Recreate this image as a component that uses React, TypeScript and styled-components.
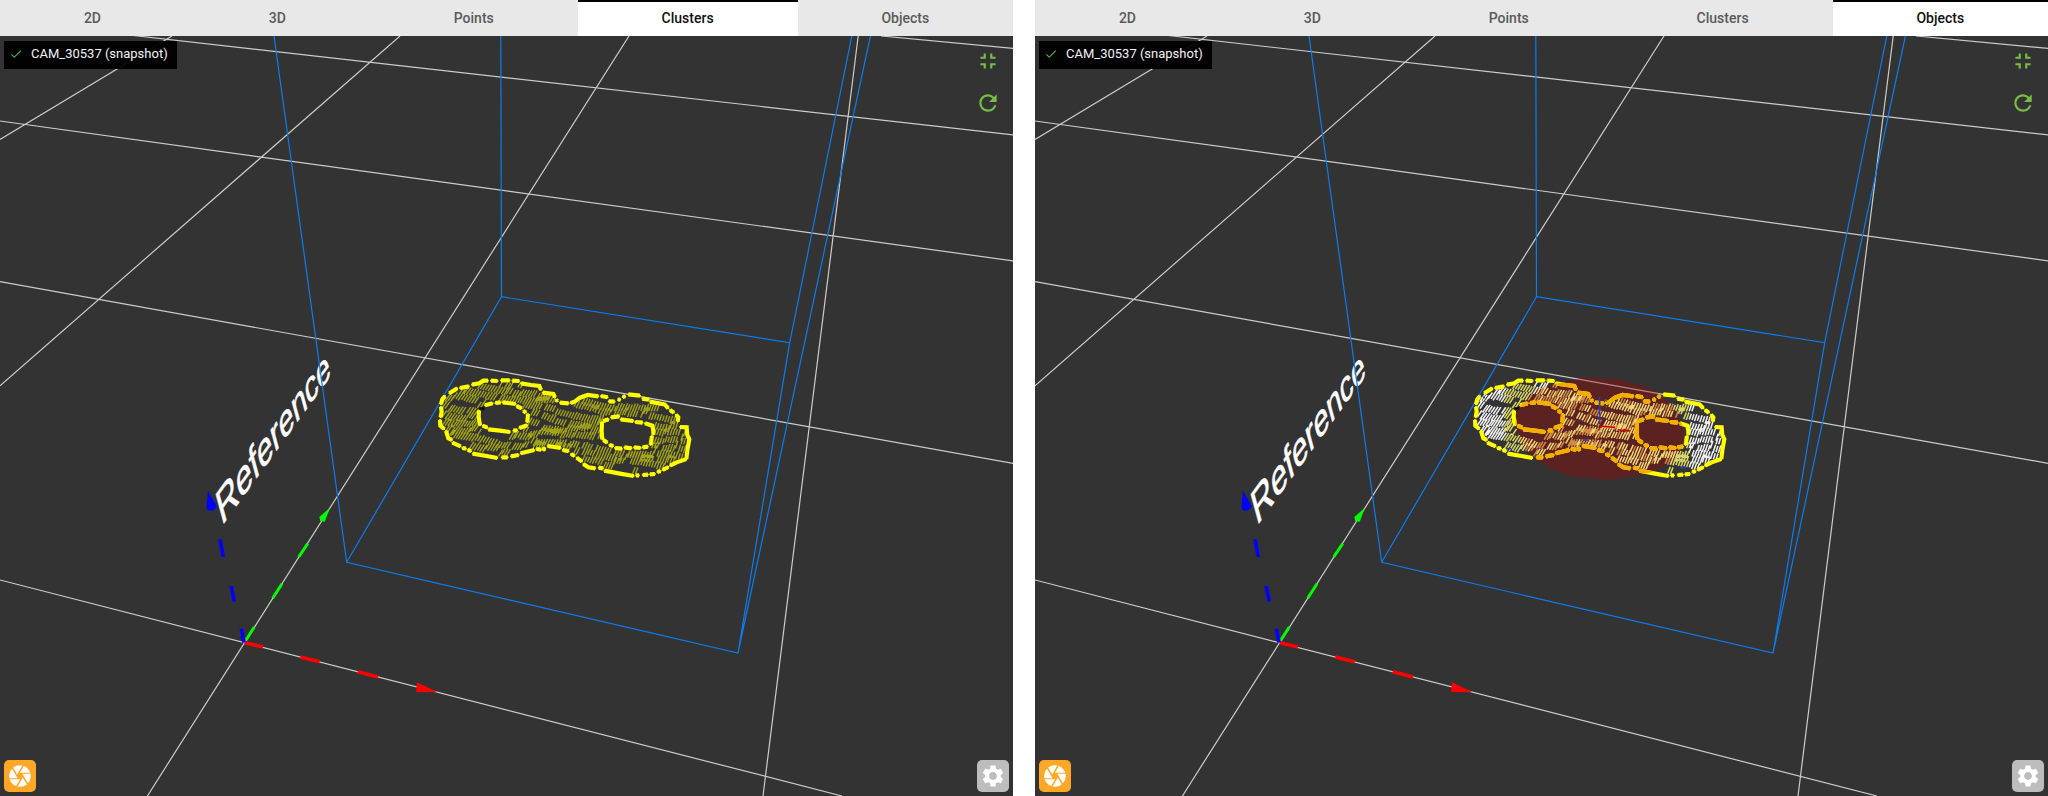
import React, { useId, useState } from "react";
import styled, { createGlobalStyle } from "styled-components";
import { MdCamera, MdCheck, MdFullscreenExit, MdRefresh, MdSettings } from "react-icons/md";

const GlobalStyle = createGlobalStyle`
  *, *::before, *::after { box-sizing: border-box; }
  body {
    margin: 0;
    background: #fff;
    font-family: Roboto, "Liberation Sans", sans-serif;
  }
`;

const Page = styled.main`
  display: grid;
  grid-template-columns: 1fr 1fr;
  column-gap: 22px;
  min-height: 100vh;
`;

const Panel = styled.section`
  display: flex;
  flex-direction: column;
  min-width: 0;
`;

const TabBar = styled.div`
  display: flex;
  height: 36px;
  background: #e8e8e8;
`;

const Tab = styled.button<{ $active: boolean }>`
  flex: 1 1 auto;
  padding: 0;
  border: 0;
  border-top: 2px solid ${(p) => (p.$active ? "#000" : "transparent")};
  border-bottom: 2px solid transparent;
  background: ${(p) => (p.$active ? "#fff" : "transparent")};
  color: ${(p) => (p.$active ? "#111" : "#5a5a5a")};
  font-family: inherit;
  font-size: 14px;
  font-weight: 500;
  line-height: 20px;
  cursor: pointer;
`;

const Viewport = styled.div`
  position: relative;
  flex: 1;
  display: flex;
  flex-direction: column;
  justify-content: space-between;
  padding: 4px;
  background: #333;
  overflow: hidden;
`;

const SceneCanvas = styled.svg`
  position: absolute;
  inset: 0;
  width: 100%;
  height: 100%;
`;

const Overlay = styled.div`
  position: relative;
  display: flex;
  justify-content: space-between;
  align-items: flex-start;
`;

const CameraLabel = styled.div`
  display: flex;
  align-items: center;
  gap: 8px;
  height: 28px;
  margin-top: 1px;
  padding: 0 9px 2px 5px;
  background: rgba(0, 0, 0, 0.95);
  color: #f2f2f2;
  font-size: 13px;
  line-height: 20px;

  svg { color: #4caf50; }
`;

const ViewTools = styled.div`
  display: flex;
  flex-direction: column;
`;

const ToolButton = styled.button`
  display: grid;
  place-items: center;
  width: 42px;
  height: 42px;
  padding: 0;
  border: 0;
  background: none;
  color: #78be46;
  cursor: pointer;
`;

const SquareButton = styled.button<{ $color: string }>`
  display: grid;
  place-items: center;
  width: 32px;
  height: 32px;
  padding: 0;
  border: 0;
  border-radius: 5px;
  background: ${(p) => p.$color};
  color: #fff;
  cursor: pointer;
`;

type Point = [number, number];

const GRID_LINES =
  "M881 36L1014 48.5M133 35.5L1014 135M0 121L1014 261M0 281.7L1014 463.5M0 580L842 796" +
  "M0 139.5L172 36M0 385.7L400 36M629 36L147.4 796M858.2 36L763 796";

const BOX_LINES =
  "M274 36L346.7 562.3L738 653L789.7 342.7L501.5 296.7L346.7 562.3" +
  "M500.8 36L501.5 296.7M789.7 342.7L851.8 36M738 653L870.4 36";

/* Contours of the scanned part, in thirds of a scene unit. */
const OUTER_CONTOUR =
  "M63 133L67 118L75 108M88 100L112 85M120 84L147 79M156 74L178 70L190 62L204 62M213 62L233 63" +
  "M243 61L269 61M277 62L298 63M303 70L333 75L358 78L363 90M368 98L400 102L405 112M408 119L413 124" +
  "M420 128L446 130M452 129L464 125L480 113L503 105L535 109M543 108L563 112M566 124L584 125" +
  "M594 120L601 118M608 111L616 109M625 103L660 107M667 116L687 119M690 125L734 133L745 145" +
  "M750 150L762 158M768 164L775 172L773 185M780 201L800 202L802 225L808 238L803 265L799 297" +
  "M799 297L770 307L750 317M745 321L728 330M722 333L712 336M690 343L705 342M668 345L684 344" +
  "M648 346L657 346M641 348L600 341L553 332M549 325L536 323M526 325L505 322L490 312M486 305L470 293" +
  "M464 288L453 282M446 274L428 270M422 264L383 258M372 262L372 272M364 269L349 267M343 270L302 280" +
  "M296 285L273 289M263 292L245 292M232 294L200 288L158 281M154 273L143 270M138 266L127 264" +
  "M122 259L97 248M96 240L85 235L78 213M73 207L61 197L60 180M62 172L65 155L63 140";

const HOLE_CONTOURS =
  "M180 196L176 170L177 152M195 136L218 130M226 129L242 127M248 127L287 132M290 138L305 145" +
  "M310 152L318 158M324 162L322 187M322 196L298 204M292 211L280 212M270 216L240 212L205 208" +
  "M202 203L188 197M547 238L545 215L546 186M550 183L566 178M573 172L598 169M602 178L640 183" +
  "M646 186L668 188M675 190L697 197L700 212L700 224M696 228L692 255M684 260L668 262M662 264L642 262" +
  "M635 265L613 262M606 266L585 264M580 258L568 255M562 248L550 240";

const PART: Point[] = [
  [64, 133], [88, 98], [156, 76], [204, 64], [298, 64], [358, 78], [400, 102], [430, 130], [464, 125],
  [503, 105], [563, 112], [590, 124], [625, 104], [687, 119], [745, 145], [773, 180], [800, 202],
  [806, 238], [798, 297], [728, 330], [641, 346], [553, 332], [505, 322], [453, 282], [383, 258],
  [302, 280], [232, 292], [158, 279], [97, 248], [61, 197],
];
const LEFT_HOLE: Point[] = [
  [176, 150], [200, 132], [287, 132], [326, 162], [322, 196], [270, 218], [205, 210], [178, 194],
];
const RIGHT_HOLE: Point[] = [
  [545, 186], [573, 168], [640, 182], [700, 196], [694, 256], [640, 266], [580, 264], [545, 240],
];
const MATCH_AREA: Point[] = [
  [300, 72], [345, 62], [385, 52], [490, 58], [545, 72], [582, 84], [618, 104], [645, 130], [668, 165],
  [686, 205], [690, 238], [680, 270], [650, 305], [600, 333], [545, 347], [465, 360], [355, 351],
  [290, 326], [250, 303], [212, 265], [190, 228], [181, 190], [185, 150], [215, 115], [255, 88],
];

function inside([x, y]: Point, shape: Point[]) {
  let hit = false;
  for (let i = 0, j = shape.length - 1; i < shape.length; j = i++) {
    const [xi, yi] = shape[i];
    const [xj, yj] = shape[j];
    if (yi > y !== yj > y && x < ((xj - xi) * (y - yi)) / (yj - yi) + xi) hit = !hit;
  }
  return hit;
}

const onPart = (p: Point) => inside(p, PART) && !inside(p, LEFT_HOLE) && !inside(p, RIGHT_HOLE);

type Tone = "plain" | "edge" | "tan" | "light";

/* Scan rows: short slanted strokes whose lean eases off toward the right. */
function buildScan(): Record<Tone, string> {
  let seed = 7;
  const random = () => {
    seed = (seed * 16807) % 2147483647;
    return seed / 2147483647;
  };
  const paths: Record<Tone, string> = { plain: "", edge: "", tan: "", light: "" };
  for (let row = -6; row < 16; row++) {
    let drift = 0;
    for (let x = 50; x < 815; x += 8) {
      if (random() < 0.2) drift = random() * 18 - 9;
      const mid = 40 + row * 22 + x * 0.12 + drift + 5 * Math.sin(x / 45 + row);
      const half = 8 + random() * 4;
      const lean = 0.75 - (x / 815) * 0.45;
      const bottom: Point = [x - half * lean, mid + half];
      const top: Point = [x + half * lean, mid - half];
      if (!onPart([x, mid]) || !onPart(bottom) || !onPart(top) || random() < 0.04) continue;
      let tone: Tone = "plain";
      if (inside([x, mid], MATCH_AREA)) tone = random() < (x > 440 ? 0.7 : 0.45) ? "light" : "tan";
      else if ((x > 150 && x < 240) || (x > 620 && x < 700)) tone = "edge";
      paths[tone] += `M${bottom[0].toFixed(1)} ${bottom[1].toFixed(1)}L${top[0].toFixed(1)} ${top[1].toFixed(1)}`;
    }
  }
  return paths;
}

const SCAN = buildScan();
const toPoints = (shape: Point[]) => shape.map((p) => p.join(",")).join(" ");
const LETTER_SIZES = [108, 106, 104, 102, 100, 98, 96, 94, 92];

function Axes() {
  return (
    <g fill="none">
      <g stroke="#f00" strokeWidth="3.6">
        <path d="M244.7 642.7L263 647M300.3 657L319.7 661.7M357.7 671.7L378 677" />
        <path d="M417 682.3L416 692L437.5 692.3Z" fill="#f00" stroke="none" />
      </g>
      <g stroke="#0f0" strokeWidth="3">
        <path d="M246 640L254.3 627M272.7 598.3L282 583.7M298.7 557L307.7 543.7" />
        <path d="M330 507.7L319.3 517L320.3 521L324.7 521.7Z" fill="#0f0" stroke="none" />
      </g>
      <g stroke="#00f" strokeWidth="3.6">
        <path d="M244 642.7L241.3 628.7M234.3 601.7L231 586M223.3 557L220 539.3" />
        <path d="M208 491L206.3 508.3L208.7 510.7L212.7 510.7L217 506.7Z" fill="#00f" stroke="none" />
      </g>
    </g>
  );
}

function Contours({ color, clipPath }: { color: string; clipPath?: string }) {
  return (
    <g stroke={color} clipPath={clipPath}>
      <path d={OUTER_CONTOUR + HOLE_CONTOURS} strokeWidth="12.5" />
      <path d={OUTER_CONTOUR + HOLE_CONTOURS} strokeWidth="5" strokeLinecap="square" />
    </g>
  );
}

function ClusterCloud() {
  return (
    <g transform="translate(420 360) scale(0.3333)" fill="none">
      <path d={SCAN.plain + SCAN.edge + SCAN.tan + SCAN.light} stroke="#a5a518" strokeWidth="4" />
      <Contours color="#ff0" />
      <path d="M178 145H190V151" stroke="#000" strokeWidth="6" />
    </g>
  );
}

function ObjectCloud() {
  const clip = useId();
  return (
    <g transform="translate(420 360) scale(0.3333)" fill="none">
      <clipPath id={clip}>
        <polygon points={toPoints(MATCH_AREA)} />
      </clipPath>
      <polygon points={toPoints(MATCH_AREA)} fill="rgba(168, 0, 0, 0.35)" />
      <g strokeWidth="4.6">
        <path d={SCAN.plain} stroke="#f0f0f0" />
        <path d={SCAN.edge} stroke="#d8d468" />
        <path d={SCAN.tan} stroke="#d08c44" />
        <path d={SCAN.light} stroke="#f0d878" />
      </g>
      <Contours color="#ff0" />
      <Contours color="#f5ae00" clipPath={`url(#${clip})`} />
      <path d="M178 145H190V151" stroke="#000" strokeWidth="6" />
      <path d="M434 110V192M384 240H400M676 323H698M118 72H124M84 112H90M154 266H168" stroke="#2a3ca8" strokeWidth="5" />
      <path d="M450 118L456 124M452 140H456" stroke="#2c8a2c" strokeWidth="5" />
      <path d="M434 198L480 202M490 210L525 213" stroke="#d80000" strokeWidth="5" />
    </g>
  );
}

function Scene({ children }: { children: React.ReactNode }) {
  return (
    <SceneCanvas viewBox="0 36 1013 760" preserveAspectRatio="xMidYMid slice" role="img" aria-label="3D scene">
      <path d={GRID_LINES} fill="none" stroke="#cccccc" strokeWidth="1.2" />
      <text
        transform="matrix(0.2385 -0.329 0.1066 0.392 221.7 526.2)"
        fill="#fff"
        stroke="#fff"
        strokeWidth="1.5"
        fontFamily='"Liberation Sans", sans-serif'
      >
        {"Reference".split("").map((letter, i) => (
          <tspan key={i} fontSize={LETTER_SIZES[i]}>{letter}</tspan>
        ))}
      </text>
      <path d={BOX_LINES} fill="none" stroke="#0c7cee" strokeWidth="1.2" />
      <Axes />
      {children}
    </SceneCanvas>
  );
}

const TABS = ["2D", "3D", "Points", "Clusters", "Objects"];

function CameraPanel({ initialTab, children }: { initialTab: string; children: React.ReactNode }) {
  const [active, setActive] = useState(initialTab);
  return (
    <Panel>
      <TabBar role="tablist">
        {TABS.map((name) => (
          <Tab
            key={name}
            type="button"
            role="tab"
            aria-selected={name === active}
            $active={name === active}
            onClick={() => setActive(name)}
          >
            {name}
          </Tab>
        ))}
      </TabBar>
      <Viewport>
        <Scene>{children}</Scene>
        <Overlay>
          <CameraLabel>
            <MdCheck size={14} />
            CAM_30537 (snapshot)
          </CameraLabel>
          <ViewTools>
            <ToolButton type="button" aria-label="Fit view"><MdFullscreenExit size={26} /></ToolButton>
            <ToolButton type="button" aria-label="Refresh"><MdRefresh size={26} /></ToolButton>
          </ViewTools>
        </Overlay>
        <Overlay>
          <SquareButton type="button" aria-label="Take snapshot" $color="#ffa726"><MdCamera size={26} /></SquareButton>
          <SquareButton type="button" aria-label="Settings" $color="#bdbdbd"><MdSettings size={26} /></SquareButton>
        </Overlay>
      </Viewport>
    </Panel>
  );
}

export default function App() {
  return (
    <>
      <GlobalStyle />
      <Page>
        <CameraPanel initialTab="Clusters">
          <ClusterCloud />
        </CameraPanel>
        <CameraPanel initialTab="Objects">
          <ObjectCloud />
        </CameraPanel>
      </Page>
    </>
  );
}
